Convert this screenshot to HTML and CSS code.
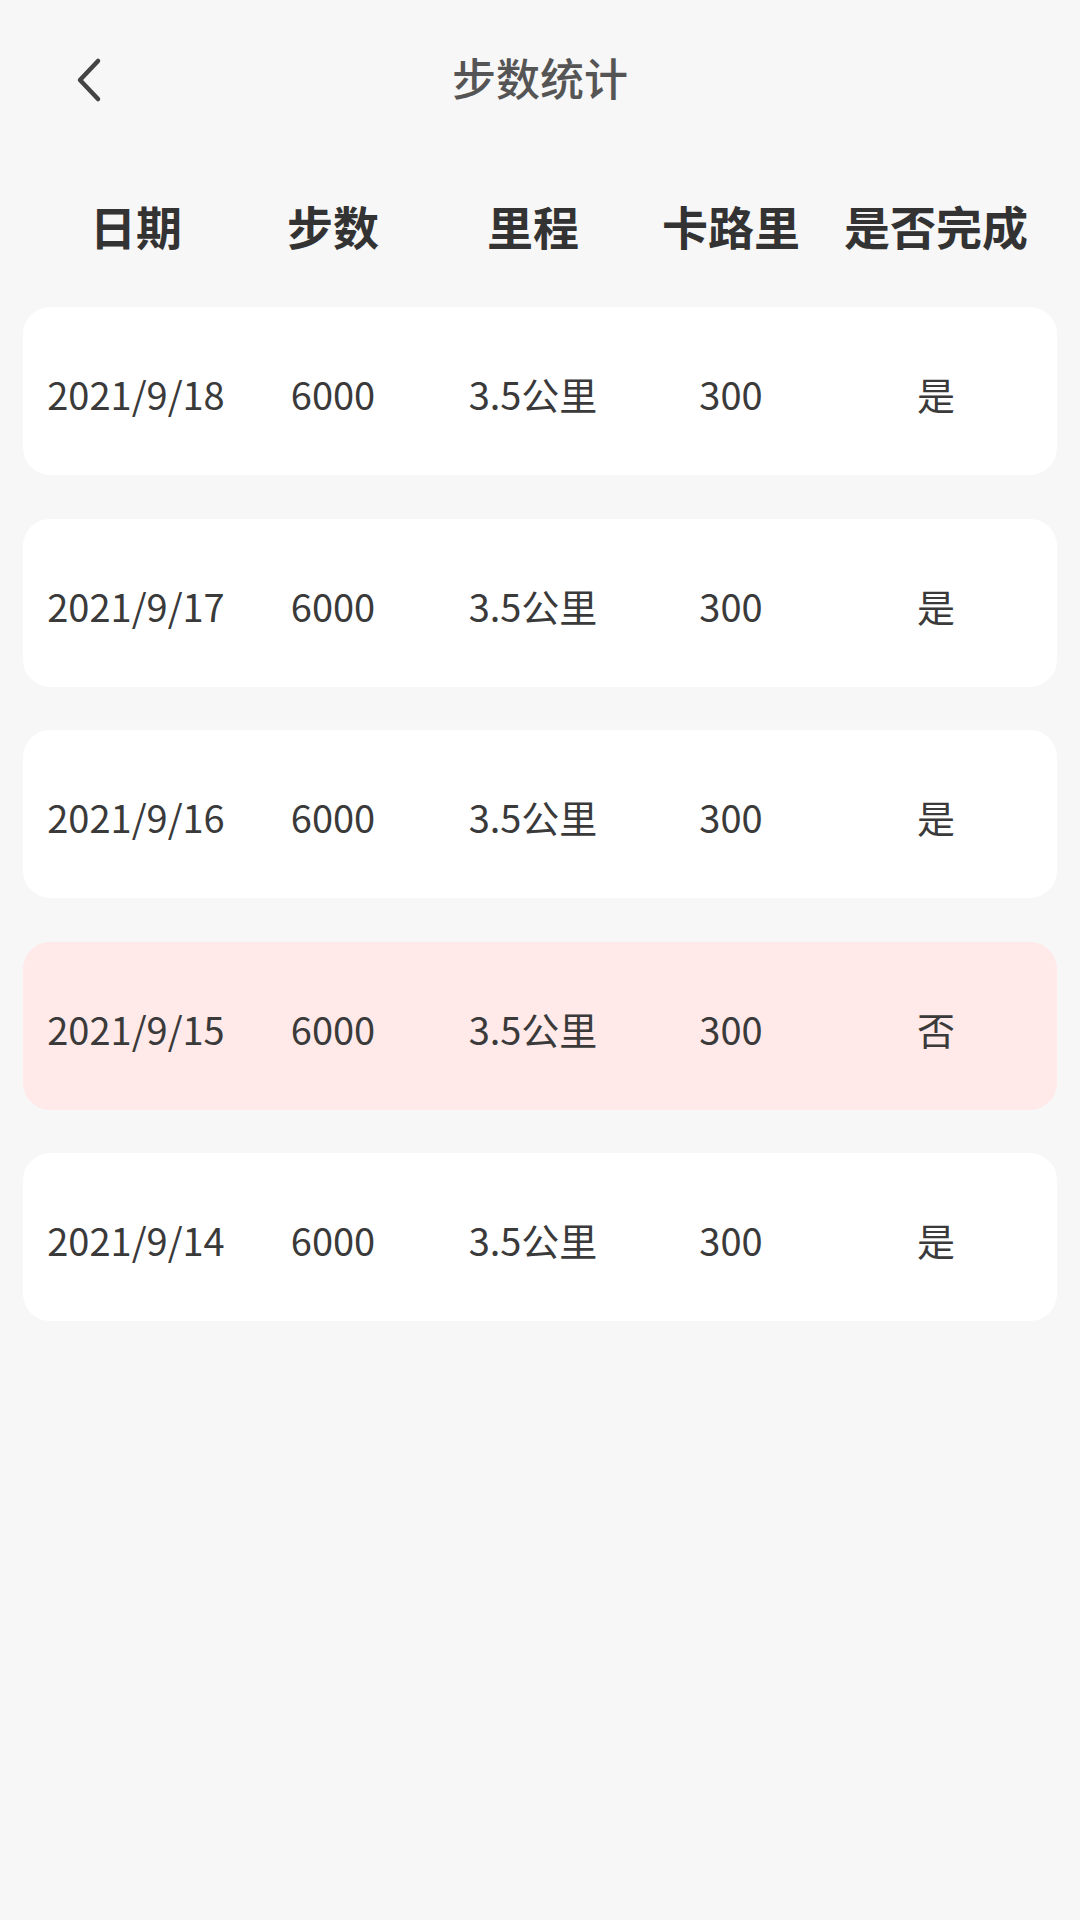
FILE: index.html
```html
<!DOCTYPE html>
<html lang="zh-CN">
<head>
    <meta charset="UTF-8">
    <meta name="viewport" content="width=device-width, initial-scale=1.0">
    <title>步数统计</title>
    <link rel="stylesheet" href="styles.css">
</head>
<body>
    <div class="nav">
        <div class="nav-left">
            <svg class="back" width="30" height="48" viewBox="0 0 30 48">
                <path d="M24 4 L6 23 L24 42" fill="none" stroke="#444" stroke-width="4.5" stroke-linecap="round" stroke-linejoin="round"/>
            </svg>
        </div>
        <div class="nav-title">步数统计</div>
        <div class="nav-right"></div>
    </div>

    <div class="head">
        <div class="cell">日期</div>
        <div class="cell">步数</div>
        <div class="cell">里程</div>
        <div class="cell">卡路里</div>
        <div class="cell">是否完成</div>
    </div>

    <div class="list">
        <div class="row">
            <div class="cell">2021/9/18</div>
            <div class="cell">6000</div>
            <div class="cell">3.5公里</div>
            <div class="cell">300</div>
            <div class="cell">是</div>
        </div>
        <div class="row">
            <div class="cell">2021/9/17</div>
            <div class="cell">6000</div>
            <div class="cell">3.5公里</div>
            <div class="cell">300</div>
            <div class="cell">是</div>
        </div>
        <div class="row">
            <div class="cell">2021/9/16</div>
            <div class="cell">6000</div>
            <div class="cell">3.5公里</div>
            <div class="cell">300</div>
            <div class="cell">是</div>
        </div>
        <div class="row undone">
            <div class="cell">2021/9/15</div>
            <div class="cell">6000</div>
            <div class="cell">3.5公里</div>
            <div class="cell">300</div>
            <div class="cell">否</div>
        </div>
        <div class="row">
            <div class="cell">2021/9/14</div>
            <div class="cell">6000</div>
            <div class="cell">3.5公里</div>
            <div class="cell">300</div>
            <div class="cell">是</div>
        </div>
    </div>
</body>
</html>
```

FILE: styles.css
```css
html, body {
    height: 100%;
}

body {
    margin: 0;
    background-color: #f7f7f7;
    font-family: "Noto Sans CJK SC", "Noto Sans", sans-serif;
    color: #333;
}

.nav {
    height: 154px;
    display: grid;
    grid-template-columns: 1fr auto 1fr;
    align-items: center;
}

.nav-left {
    padding: 7px 0 0 74px;
    display: flex;
    align-items: center;
}

.back {
    display: block;
}

.nav-title {
    font-size: 44px;
    font-weight: 500;
    color: #555;
}

.head {
    height: 142px;
    display: flex;
    align-items: center;
    padding: 0 36px;
    font-size: 46px;
    font-weight: bold;
}

.list {
    padding: 11px 23px 0;
}

.row {
    height: 168px;
    margin-bottom: 43.5px;
    padding: 5px 13px 0;
    box-sizing: border-box;
    display: flex;
    align-items: center;
    background-color: #fff;
    border-radius: 27px;
    font-size: 38px;
    color: #3a3a3a;
}

.row.undone {
    background-color: #ffe9e9;
}

.cell {
    width: 200px;
    flex-shrink: 0;
    text-align: center;
    white-space: nowrap;
}

/* columns are not quite even in the design */
.cell:nth-child(2) {
    width: 194px;
}

.cell:nth-child(3) {
    width: 206px;
}

.cell:nth-child(4) {
    width: 190px;
}

.cell:nth-child(5) {
    width: 220px;
}
```
